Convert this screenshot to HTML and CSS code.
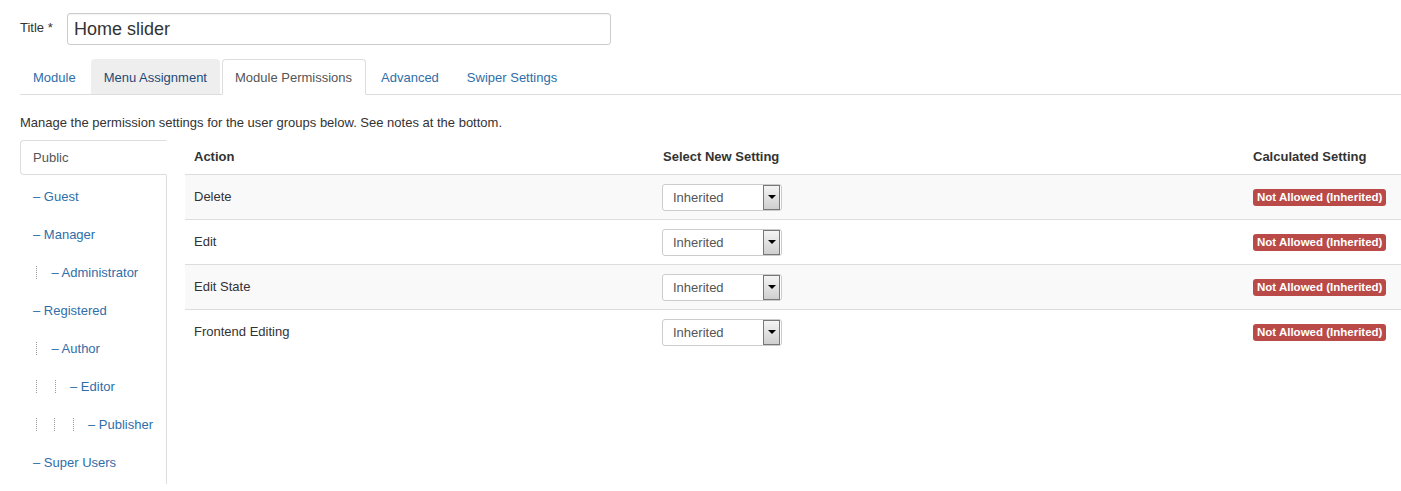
FILE: index.html
```html
<!DOCTYPE html>
<html>
<head>
<meta charset="utf-8">
<link rel="stylesheet" href="styles.css">
</head>
<body>
<div class="page">
  <div class="title-row">
    <label class="title-label">Title *</label>
    <div class="title-input">Home slider</div>
  </div>

  <ul class="tabs">
    <li class="tab"><a>Module</a></li>
    <li class="tab hover"><a>Menu Assignment</a></li>
    <li class="tab active"><a>Module Permissions</a></li>
    <li class="tab"><a>Advanced</a></li>
    <li class="tab"><a>Swiper Settings</a></li>
  </ul>

  <p class="intro">Manage the permission settings for the user groups below. See notes at the bottom.</p>

  <div class="perm">
    <ul class="groups">
      <li class="group active"><a>Public</a></li>
      <li class="group"><a>– Guest</a></li>
      <li class="group"><a>– Manager</a></li>
      <li class="group"><a><span class="lvl"></span>– Administrator</a></li>
      <li class="group"><a>– Registered</a></li>
      <li class="group"><a><span class="lvl"></span>– Author</a></li>
      <li class="group"><a><span class="lvl"></span><span class="lvl"></span>– Editor</a></li>
      <li class="group"><a><span class="lvl"></span><span class="lvl"></span><span class="lvl"></span>– Publisher</a></li>
      <li class="group"><a>– Super Users</a></li>
    </ul>

    <table class="rules">
      <thead>
        <tr><th class="c-action">Action</th><th class="c-select">Select New Setting</th><th class="c-calc">Calculated Setting</th></tr>
      </thead>
      <tbody>
        <tr class="odd"><td>Delete</td><td><span class="select"><span class="sel-text">Inherited</span><span class="sel-btn"><span class="caret"></span></span></span></td><td><span class="badge">Not Allowed (Inherited)</span></td></tr>
        <tr><td>Edit</td><td><span class="select"><span class="sel-text">Inherited</span><span class="sel-btn"><span class="caret"></span></span></span></td><td><span class="badge">Not Allowed (Inherited)</span></td></tr>
        <tr class="odd"><td>Edit State</td><td><span class="select"><span class="sel-text">Inherited</span><span class="sel-btn"><span class="caret"></span></span></span></td><td><span class="badge">Not Allowed (Inherited)</span></td></tr>
        <tr><td>Frontend Editing</td><td><span class="select"><span class="sel-text">Inherited</span><span class="sel-btn"><span class="caret"></span></span></span></td><td><span class="badge">Not Allowed (Inherited)</span></td></tr>
      </tbody>
    </table>
  </div>
</div>
</body>
</html>
```

FILE: styles.css
```css
* { box-sizing: border-box; }
html, body { margin: 0; padding: 0; background: #fff; }
body {
  font-family: "Liberation Sans", Arial, Helvetica, sans-serif;
  font-size: 13px;
  color: #333;
}
.page { padding: 13px 0 0 20px; }

.title-row { display: flex; align-items: center; height: 32px; }
.title-label { font-size: 13px; width: 47px; margin-top: -3px; }
.title-input {
  width: 544px; height: 32px;
  border: 1px solid #ccc; border-radius: 3px;
  font-size: 18px; line-height: 30px; padding: 0 6px;
  color: #333;
  box-shadow: inset 0 1px 1px rgba(0,0,0,0.05);
}

.tabs {
  list-style: none; margin: 14px 0 0 0; padding: 0;
  display: flex; border-bottom: 1px solid #ddd; height: 36px;
}
.tab { margin-right: 2px; }
.tab a {
  display: block; height: 35px; line-height: 35px; padding: 0 12px;
  color: #2f6ea8; border: 1px solid transparent; border-radius: 4px 4px 0 0;
}
.tab.hover a { background: #eee; border-color: #eee #eee transparent; color: #1f4a78; }
.tab.active a { background: #fff; border-color: #ddd #ddd #fff; color: #555; height: 36px; padding: 0 13px 0 12px; }

.intro { margin: 20px 0 9px 0; font-size: 13px; line-height: 16px; }

.perm { display: flex; align-items: flex-start; }
.groups {
  list-style: none; margin: 0; padding: 0;
  width: 147px; border-right: 1px solid #ddd; flex: none;
  padding-bottom: 3px;
}
.group { height: 38px; }
.group a {
  display: flex; align-items: center; height: 35px;
  padding: 0 13px; color: #2f6ea8; white-space: nowrap;
}
.group.active a {
  border: 1px solid #ddd; border-right-color: #fff; border-radius: 4px 0 0 4px;
  color: #555; margin-right: -1px; background: #fff; padding-left: 12px;
}
.group:nth-child(n+2) a { height: 38px; }
.group:nth-child(2) { margin-top: -1px; }
.lvl {
  display: inline-block; width: 18.5px; height: 13px;
  border-left: 1px dotted #999; margin-left: 3px; margin-right: -3px;
}

.rules {
  border-collapse: collapse; margin-left: 18px; width: 1216px;
  table-layout: fixed;
}
.rules th {
  text-align: left; font-weight: bold; padding: 0 9px; height: 34px;
  vertical-align: middle; border-bottom: 1px solid #ddd;
}
.c-action { width: 469px; }
.c-select { width: 591px; }
.c-calc { width: 156px; padding-left: 8px !important; }
.rules td {
  height: 45px; padding: 0 9px; border-top: 1px solid #ddd; vertical-align: middle;
}
.rules td:nth-child(2) { padding-left: 8px; }
.rules td:nth-child(3) { padding-left: 8px; }
.rules tr.odd td { background: #f9f9f9; }
.rules thead + tbody tr:first-child td { border-top: 0; }

.select {
  display: inline-flex; align-items: center; justify-content: space-between;
  width: 120px; height: 27px; border: 1px solid #ccc; border-radius: 3px;
  background: #fff; padding: 0 1px 0 10px; color: #555; vertical-align: middle;
  margin-top: 1px;
}
.sel-btn {
  width: 17px; height: 25px; border: 1px solid #777;
  background: linear-gradient(#f4f4f4, #cfcfcf);
  display: flex; align-items: center; justify-content: center;
}
.caret {
  width: 0; height: 0; border-left: 4px solid transparent; border-right: 4px solid transparent;
  border-top: 4px solid #000;
}
.badge {
  display: inline-block; background: #b94a48; color: #fff; font-weight: bold;
  font-size: 11.5px; line-height: 17px; padding: 0 4px; border-radius: 3px;
  white-space: nowrap; margin-top: 1px;
}
```
